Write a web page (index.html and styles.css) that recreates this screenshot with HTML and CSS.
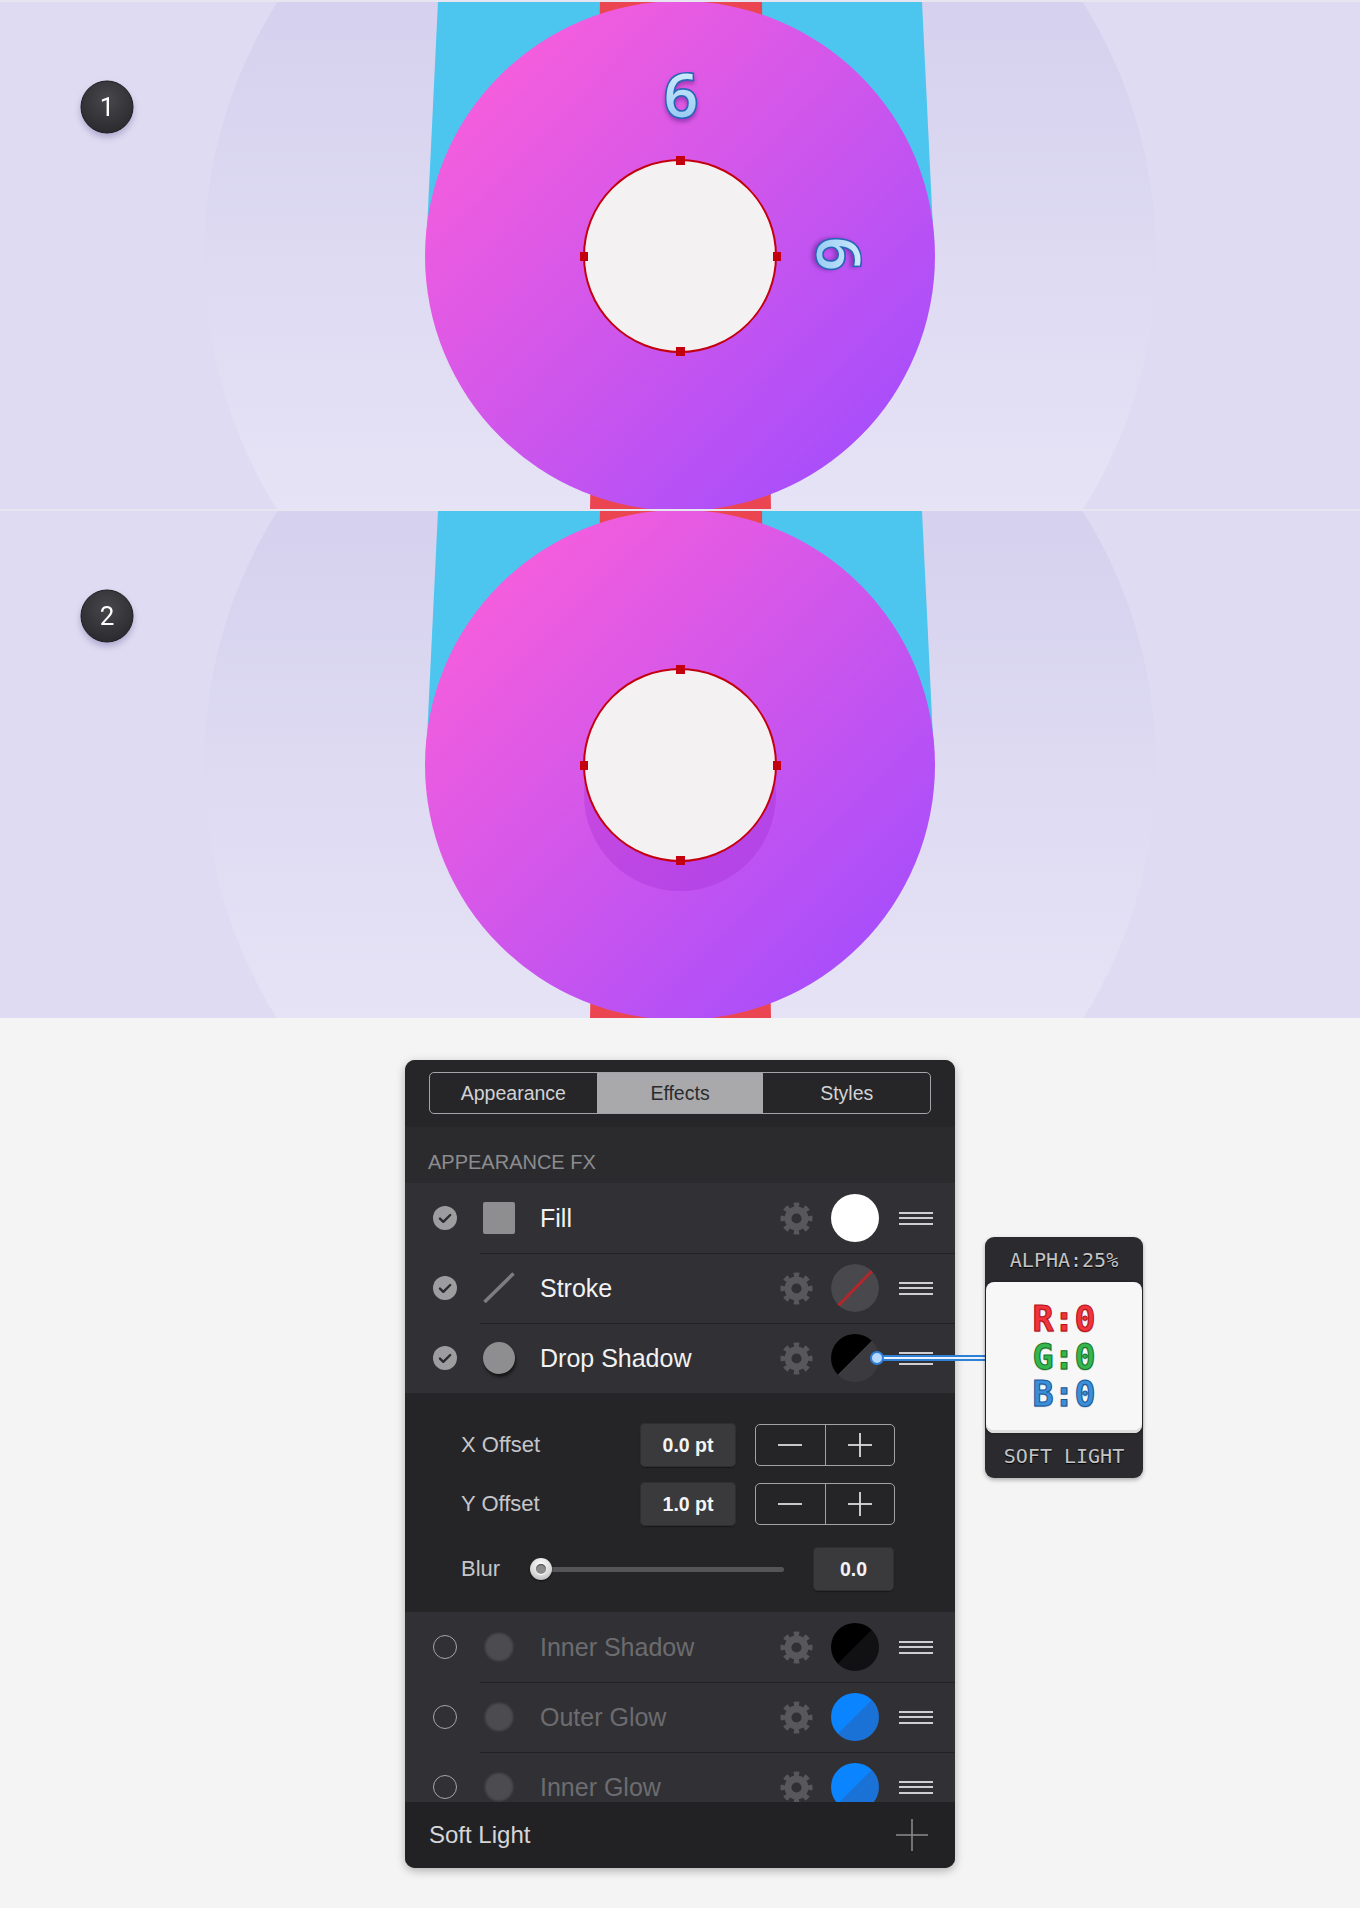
FILE: index.html
```html
<!DOCTYPE html>
<html lang="en">
<head>
<meta charset="utf-8">
<title>Appearance FX</title>
<link rel="stylesheet" href="styles.css">
</head>
<body>
<div class="canvas-stack">
  <svg class="art" viewBox="0 0 1360 507" width="1360" height="507">
    <defs>
      <linearGradient id="lensGrad" gradientUnits="userSpaceOnUse" x1="0" y1="0" x2="0" y2="507">
        <stop offset="0" stop-color="#d5d1ee"/>
        <stop offset="1" stop-color="#e6e3f6"/>
      </linearGradient>
      <linearGradient id="donutGrad" gradientUnits="userSpaceOnUse" x1="440" y1="20" x2="920" y2="490">
        <stop offset="0" stop-color="#ff60d8"/>
        <stop offset="1" stop-color="#9e4cff"/>
      </linearGradient>
      <linearGradient id="sixGrad" x1="0" y1="0" x2="0" y2="1">
        <stop offset="0" stop-color="#e2f6ff"/>
        <stop offset="1" stop-color="#86c2f0"/>
      </linearGradient>
      <radialGradient id="badgeGrad" cx="0.5" cy="0.35" r="0.7">
        <stop offset="0" stop-color="#47474c"/>
        <stop offset="1" stop-color="#29292d"/>
      </radialGradient>
    </defs>
    <rect width="1360" height="507" fill="#dedbf2"/>
    <circle cx="680" cy="254" r="476" fill="url(#lensGrad)"/>
    <polygon points="438,0 922,0 934,248 426,248" fill="#4cc5ef"/>
    <polygon points="600,0 762,0 771,507 590,507" fill="#ec4552"/>
    <circle cx="680" cy="254" r="255" fill="url(#donutGrad)"/>
    <circle cx="680" cy="254" r="96" fill="#f3f1f2" stroke="#c4000e" stroke-width="2"/>
    <rect x="676" y="154" width="9" height="9" fill="#c4000e"/>
    <rect x="676" y="345" width="9" height="9" fill="#c4000e"/>
    <rect x="580" y="250" width="8" height="9" fill="#c4000e"/>
    <rect x="773" y="250" width="8" height="9" fill="#c4000e"/>
    <text class="six" x="681" y="115" text-anchor="middle">6</text>
    <text class="six" transform="translate(839 252) rotate(90)" x="0" y="22" text-anchor="middle">6</text>
    <g class="badge">
      <circle cx="107" cy="105" r="26" fill="url(#badgeGrad)" stroke="#1c1c1f" stroke-width="1"/>
      <text class="badge-num" x="107" y="114" text-anchor="middle">1</text>
    </g>
  </svg>
  <svg class="art" viewBox="0 0 1360 507" width="1360" height="507">
    <rect width="1360" height="507" fill="#dedbf2"/>
    <circle cx="680" cy="254" r="476" fill="url(#lensGrad)"/>
    <polygon points="438,0 922,0 934,248 426,248" fill="#4cc5ef"/>
    <polygon points="600,0 762,0 771,507 590,507" fill="#ec4552"/>
    <circle cx="680" cy="254" r="255" fill="url(#donutGrad)"/>
    <circle cx="680" cy="284" r="96" fill="#8a10c0" fill-opacity="0.2"/>
    <circle cx="680" cy="254" r="96" fill="#f3f1f2" stroke="#c4000e" stroke-width="2"/>
    <rect x="676" y="154" width="9" height="9" fill="#c4000e"/>
    <rect x="676" y="345" width="9" height="9" fill="#c4000e"/>
    <rect x="580" y="250" width="8" height="9" fill="#c4000e"/>
    <rect x="773" y="250" width="8" height="9" fill="#c4000e"/>
    <g class="badge">
      <circle cx="107" cy="105" r="26" fill="url(#badgeGrad)" stroke="#1c1c1f" stroke-width="1"/>
      <text class="badge-num" x="107" y="114" text-anchor="middle">2</text>
    </g>
  </svg>
</div>

<main class="stage">
  <div class="fx-wrap">
    <section class="fx-panel">
      <div class="tabs-bar">
        <div class="tabs">
          <div class="tab">Appearance</div>
          <div class="tab active">Effects</div>
          <div class="tab">Styles</div>
        </div>
      </div>
      <div class="section-label">APPEARANCE FX</div>

      <div class="fx-list">
        <div class="fx-row">
          <span class="check"><svg viewBox="0 0 24 24" width="24" height="24"><path d="M7 12.6l3.3 3.2L17.2 9" fill="none" stroke="#2b2b2e" stroke-width="2.4" stroke-linecap="round" stroke-linejoin="round"/></svg></span>
          <span class="ico ico-square"></span>
          <span class="fx-name">Fill</span>
          <svg class="gear" viewBox="0 0 34 34"><circle cx="17" cy="17" r="8.75" fill="none" stroke="#58585c" stroke-width="7"/><circle cx="17" cy="17" r="14" fill="none" stroke="#58585c" stroke-width="5" pathLength="80" stroke-dasharray="5 5" stroke-dashoffset="2.5"/></svg>
          <span class="swatch sw-white"></span>
          <span class="menu"><span></span><span></span><span></span></span>
        </div>
        <div class="fx-row">
          <span class="check"><svg viewBox="0 0 24 24" width="24" height="24"><path d="M7 12.6l3.3 3.2L17.2 9" fill="none" stroke="#2b2b2e" stroke-width="2.4" stroke-linecap="round" stroke-linejoin="round"/></svg></span>
          <svg class="ico" viewBox="0 0 32 32"><line x1="1.5" y1="30" x2="30.5" y2="1.5" stroke="#7d7d80" stroke-width="3.5"/></svg>
          <span class="fx-name">Stroke</span>
          <svg class="gear" viewBox="0 0 34 34"><circle cx="17" cy="17" r="8.75" fill="none" stroke="#58585c" stroke-width="7"/><circle cx="17" cy="17" r="14" fill="none" stroke="#58585c" stroke-width="5" pathLength="80" stroke-dasharray="5 5" stroke-dashoffset="2.5"/></svg>
          <svg class="swatch" viewBox="0 0 48 48"><circle cx="24" cy="24" r="24" fill="#49494d"/><line x1="7" y1="42" x2="41" y2="7" stroke="#b5262b" stroke-width="3"/></svg>
          <span class="menu"><span></span><span></span><span></span></span>
        </div>
        <div class="fx-row">
          <span class="check"><svg viewBox="0 0 24 24" width="24" height="24"><path d="M7 12.6l3.3 3.2L17.2 9" fill="none" stroke="#2b2b2e" stroke-width="2.4" stroke-linecap="round" stroke-linejoin="round"/></svg></span>
          <span class="ico ico-dot"></span>
          <span class="fx-name">Drop Shadow</span>
          <svg class="gear" viewBox="0 0 34 34"><circle cx="17" cy="17" r="8.75" fill="none" stroke="#58585c" stroke-width="7"/><circle cx="17" cy="17" r="14" fill="none" stroke="#58585c" stroke-width="5" pathLength="80" stroke-dasharray="5 5" stroke-dashoffset="2.5"/></svg>
          <span class="swatch sw-shadow"></span>
          <span class="menu"><span></span><span></span><span></span></span>
        </div>
      </div>

      <div class="settings">
        <div class="set-row">
          <span class="set-label">X Offset</span>
          <span class="val">0.0 pt</span>
          <div class="stepper">
            <span class="btn"><svg viewBox="0 0 24 24" width="24" height="24"><line x1="0" y1="12" x2="24" y2="12" stroke="#dcdcde" stroke-width="1.8"/></svg></span>
            <span class="btn"><svg viewBox="0 0 24 24" width="24" height="24"><line x1="0" y1="12" x2="24" y2="12" stroke="#dcdcde" stroke-width="1.8"/><line x1="12" y1="0" x2="12" y2="24" stroke="#dcdcde" stroke-width="1.8"/></svg></span>
          </div>
        </div>
        <div class="set-row">
          <span class="set-label">Y Offset</span>
          <span class="val">1.0 pt</span>
          <div class="stepper">
            <span class="btn"><svg viewBox="0 0 24 24" width="24" height="24"><line x1="0" y1="12" x2="24" y2="12" stroke="#dcdcde" stroke-width="1.8"/></svg></span>
            <span class="btn"><svg viewBox="0 0 24 24" width="24" height="24"><line x1="0" y1="12" x2="24" y2="12" stroke="#dcdcde" stroke-width="1.8"/><line x1="12" y1="0" x2="12" y2="24" stroke="#dcdcde" stroke-width="1.8"/></svg></span>
          </div>
        </div>
        <div class="set-row blur-row">
          <span class="set-label blur-label">Blur</span>
          <div class="slider">
            <span class="knob"><span class="knob-core"></span></span>
            <span class="track"></span>
          </div>
          <span class="val val-small">0.0</span>
        </div>
      </div>

      <div class="fx-list disabled">
        <div class="fx-row">
          <span class="radio"></span>
          <span class="ico ico-blur"></span>
          <span class="fx-name">Inner Shadow</span>
          <svg class="gear" viewBox="0 0 34 34"><circle cx="17" cy="17" r="8.75" fill="none" stroke="#58585c" stroke-width="7"/><circle cx="17" cy="17" r="14" fill="none" stroke="#58585c" stroke-width="5" pathLength="80" stroke-dasharray="5 5" stroke-dashoffset="2.5"/></svg>
          <span class="swatch sw-inner"></span>
          <span class="menu"><span></span><span></span><span></span></span>
        </div>
        <div class="fx-row">
          <span class="radio"></span>
          <span class="ico ico-blur"></span>
          <span class="fx-name">Outer Glow</span>
          <svg class="gear" viewBox="0 0 34 34"><circle cx="17" cy="17" r="8.75" fill="none" stroke="#58585c" stroke-width="7"/><circle cx="17" cy="17" r="14" fill="none" stroke="#58585c" stroke-width="5" pathLength="80" stroke-dasharray="5 5" stroke-dashoffset="2.5"/></svg>
          <span class="swatch sw-blue"></span>
          <span class="menu"><span></span><span></span><span></span></span>
        </div>
        <div class="fx-row">
          <span class="radio"></span>
          <span class="ico ico-blur"></span>
          <span class="fx-name">Inner Glow</span>
          <svg class="gear" viewBox="0 0 34 34"><circle cx="17" cy="17" r="8.75" fill="none" stroke="#58585c" stroke-width="7"/><circle cx="17" cy="17" r="14" fill="none" stroke="#58585c" stroke-width="5" pathLength="80" stroke-dasharray="5 5" stroke-dashoffset="2.5"/></svg>
          <span class="swatch sw-blue"></span>
          <span class="menu"><span></span><span></span><span></span></span>
        </div>
      </div>

      <footer class="fx-footer">
        <span class="blend">Soft Light</span>
        <svg class="add" viewBox="0 0 32 32" width="32" height="32"><line x1="0" y1="16" x2="32" y2="16" stroke="#8c8c8f" stroke-width="1.5"/><line x1="16" y1="0" x2="16" y2="32" stroke="#8c8c8f" stroke-width="1.5"/></svg>
      </footer>
    </section>

    <div class="connector"></div>
    <span class="connector-dot"></span>

    <aside class="color-tip">
      <div class="tip-head">ALPHA:25%</div>
      <div class="tip-card">
        <span class="rgb rgb-r">R:0</span>
        <span class="rgb rgb-g">G:0</span>
        <span class="rgb rgb-b">B:0</span>
      </div>
      <div class="tip-foot">SOFT LIGHT</div>
    </aside>
  </div>
</main>
</body>
</html>
```

FILE: styles.css
```css
* { box-sizing: border-box; }

body {
  margin: 0;
  background: #f4f4f4;
  font-family: "Liberation Sans", Arial, sans-serif;
}

.canvas-stack {
  display: flex;
  flex-direction: column;
  gap: 2px;
  padding-top: 2px;
  background: #e7e5f0;
}

.art {
  display: block;
  width: 1360px;
  height: 507px;
}

.six {
  font-family: "Open Sans", "DejaVu Sans", sans-serif;
  font-weight: 600;
  font-size: 60px;
  fill: url(#sixGrad);
  stroke: #2466b8;
  stroke-width: 3.2px;
  paint-order: stroke fill;
  filter: drop-shadow(0 3px 2px rgba(80, 20, 120, 0.45));
}

.badge {
  filter: drop-shadow(0 4px 3px rgba(90, 80, 140, 0.35));
}

.badge-num {
  font-family: Roboto, "Liberation Sans", sans-serif;
  font-size: 26px;
  fill: #ffffff;
}

.stage {
  padding-top: 42px;
  padding-bottom: 40px;
}

.fx-wrap {
  position: relative;
  width: 550px;
  margin: 0 auto;
}

.fx-panel {
  width: 550px;
  border-radius: 10px;
  overflow: hidden;
  background: #313135;
  box-shadow: 0 3px 10px rgba(0, 0, 0, 0.28);
}

.tabs-bar {
  background: #262629;
  padding: 12px 24px 13px;
}

.tabs {
  display: flex;
  height: 42px;
  border: 1px solid #a4a4a8;
  border-radius: 5px;
  overflow: hidden;
}

.tab {
  flex: 1;
  display: flex;
  align-items: center;
  justify-content: center;
  color: #d2d2d4;
  font-size: 19.5px;
}

.tab.active {
  background: #a9a9ab;
  color: #2c2c2e;
}

.section-label {
  height: 56px;
  background: #2b2b2e;
  padding: 23px 0 0 23px;
  font-size: 20px;
  line-height: 24px;
  color: #8c8c90;
}

.fx-list {
  background: #313135;
}

.fx-list.disabled {
  height: 190px;
  overflow: hidden;
}

.fx-row {
  position: relative;
  display: flex;
  align-items: center;
  height: 70px;
  padding: 0 22px 0 28px;
}

.fx-row + .fx-row::before {
  content: "";
  position: absolute;
  left: 75px;
  right: 0;
  top: 0;
  height: 1px;
  background: #222225;
}

.check {
  flex: none;
  width: 24px;
  height: 24px;
  border-radius: 50%;
  background: #9d9da0;
  display: flex;
}

.radio {
  flex: none;
  width: 24px;
  height: 24px;
  border-radius: 50%;
  border: 1.5px solid #a6a6a8;
}

.ico {
  flex: none;
  display: block;
  width: 32px;
  height: 32px;
  margin-left: 26px;
}

.ico-square {
  background: #8e8e90;
  border-radius: 2px;
}

.ico-dot {
  border-radius: 50%;
  background: #8e8e90;
  box-shadow: 1px 3px 3px rgba(0, 0, 0, 0.55);
}

.ico-blur {
  border-radius: 50%;
  background: #4c4c50;
  filter: blur(1.5px);
  transform: scale(0.88);
}

.fx-name {
  flex: 1;
  margin-left: 25px;
  font-size: 25px;
  color: #f2f2f2;
  white-space: nowrap;
}

.disabled .fx-name {
  color: #6c6c70;
}

.gear {
  flex: none;
  display: block;
  width: 33px;
  height: 33px;
}

.swatch {
  flex: none;
  display: block;
  width: 48px;
  height: 48px;
  margin-left: 18px;
  border-radius: 50%;
}

.sw-white { background: #ffffff; }
.sw-shadow { background: linear-gradient(135deg, #000000 50%, #3b3b3f 50%); }
.sw-inner { background: linear-gradient(135deg, #000000 50%, #111113 50%); }
.sw-blue { background: linear-gradient(135deg, #0a84ff 50%, #1b72d6 50%); }

.menu {
  flex: none;
  width: 34px;
  margin-left: 20px;
  display: flex;
  flex-direction: column;
  gap: 3.5px;
}

.menu span {
  height: 2px;
  background: #cfcfd1;
}

.settings {
  background: #252528;
  padding: 30px 0 21px 56px;
  display: flex;
  flex-direction: column;
  gap: 15px;
}

.set-row {
  display: flex;
  align-items: center;
  height: 44px;
}

.blur-row {
  margin-top: 6px;
}

.set-label {
  flex: none;
  width: 179px;
  font-size: 22px;
  color: #c6c6ca;
}

.blur-label {
  width: 69px;
}

.val {
  flex: none;
  width: 96px;
  height: 44px;
  border-radius: 5px;
  background: #3a3a3d;
  box-shadow: inset 0 0 0 1px #2f2f32, 0 1px 1px rgba(0, 0, 0, 0.35);
  display: flex;
  align-items: center;
  justify-content: center;
  color: #f4f4f4;
  font-weight: 700;
  font-size: 19.5px;
}

.val-small {
  width: 81px;
  margin-left: 29px;
}

.stepper {
  flex: none;
  width: 140px;
  height: 42px;
  margin-left: 19px;
  border: 1.5px solid #a2a2a5;
  border-radius: 5px;
  display: flex;
}

.stepper .btn {
  flex: 1;
  display: flex;
  align-items: center;
  justify-content: center;
}

.stepper .btn + .btn {
  border-left: 1.5px solid #a2a2a5;
}

.slider {
  flex: none;
  width: 254px;
  display: flex;
  align-items: center;
}

.knob {
  flex: none;
  z-index: 1;
  width: 22px;
  height: 22px;
  border-radius: 50%;
  background: radial-gradient(circle at 50% 30%, #fdfdfd, #d6d6d6 60%, #a2a2a2);
  box-shadow: 0 1px 2px rgba(0, 0, 0, 0.6);
  display: flex;
  align-items: center;
  justify-content: center;
}

.knob-core {
  width: 10px;
  height: 10px;
  border-radius: 50%;
  background: #8c8c8c;
  box-shadow: inset 0 1px 1px rgba(0, 0, 0, 0.5), 0 1px 0 #ffffff;
}

.track {
  flex: 1;
  height: 5px;
  margin-left: -11px;
  border-radius: 3px;
  background: #555558;
}

.fx-footer {
  height: 66px;
  background: #222225;
  padding: 0 27px 0 24px;
  display: flex;
  align-items: center;
  justify-content: space-between;
}

.blend {
  font-size: 24px;
  color: #d6d6d8;
}

.add {
  display: block;
}

.connector {
  position: absolute;
  left: 472px;
  top: 295px;
  width: 114px;
  height: 6px;
  background: #eaf4ff;
  border-top: 2px solid #2f7fd6;
  border-bottom: 2px solid #2f7fd6;
}

.connector-dot {
  position: absolute;
  left: 465px;
  top: 291px;
  width: 14px;
  height: 14px;
  border-radius: 50%;
  background: #b6d9ff;
  border: 2px solid #2f7fd6;
}

.color-tip {
  position: absolute;
  left: 580px;
  top: 177px;
  width: 158px;
  padding: 0 1px;
  background: #2b2b2f;
  border-radius: 9px;
  box-shadow: 0 2px 4px rgba(0, 0, 0, 0.3);
  font-family: "DejaVu Sans Mono", "Liberation Mono", monospace;
  display: flex;
  flex-direction: column;
}

.tip-head,
.tip-foot {
  height: 45px;
  display: flex;
  align-items: center;
  justify-content: center;
  color: #c4c4c6;
  font-size: 20px;
  text-shadow: 0 1px 1px #000000;
}

.tip-card {
  height: 151px;
  background: #f7f7f7;
  border-radius: 8px;
  box-shadow: 0 0 3px rgba(0, 0, 0, 0.45), inset 0 -3px 0 #dedede;
  display: flex;
  flex-direction: column;
  align-items: center;
  justify-content: center;
}

.rgb {
  font-size: 35px;
  font-weight: 700;
  line-height: 37.5px;
}

.rgb-r { color: #f0343c; -webkit-text-stroke: 1px #b3121b; text-shadow: 0 1px 1px rgba(120, 0, 0, 0.4); }
.rgb-g { color: #34b54d; -webkit-text-stroke: 1px #17752a; text-shadow: 0 1px 1px rgba(0, 80, 20, 0.4); }
.rgb-b { color: #3b8fd8; -webkit-text-stroke: 1px #1a5898; text-shadow: 0 1px 1px rgba(0, 40, 100, 0.4); }
```
